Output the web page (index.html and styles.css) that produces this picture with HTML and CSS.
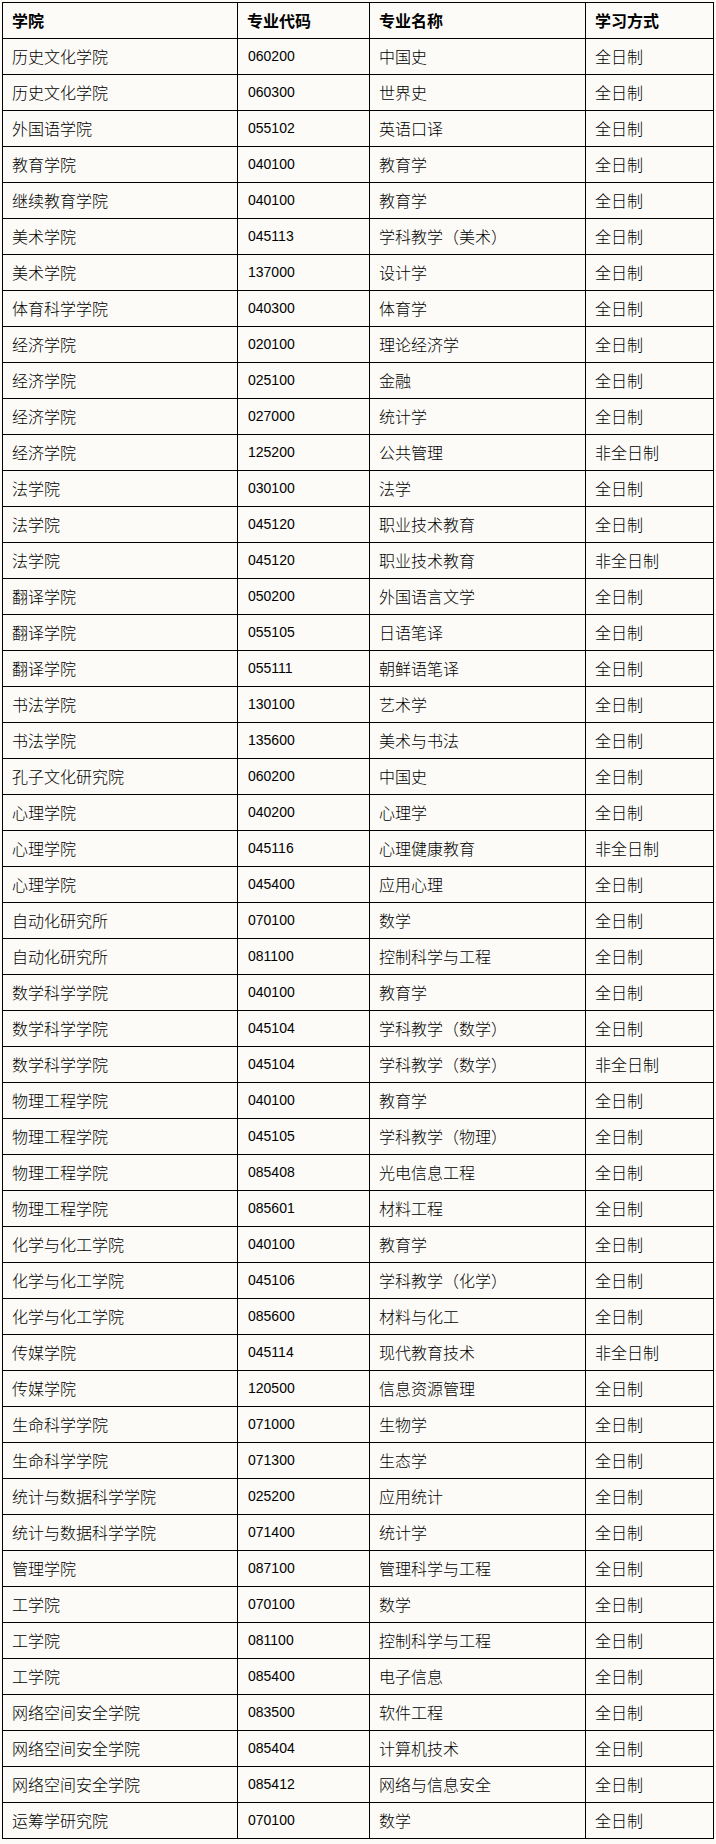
FILE: index.html
```html
<!DOCTYPE html>
<html lang="zh-CN">
<head>
<meta charset="utf-8">
<title>专业列表</title>
<link rel="stylesheet" href="styles.css">
</head>
<body>
<table class="majors">
<colgroup>
<col class="c-college">
<col class="c-code">
<col class="c-name">
<col class="c-mode">
</colgroup>
<thead>
<tr><th>学院</th><th>专业代码</th><th>专业名称</th><th>学习方式</th></tr>
</thead>
<tbody>
<tr><td>历史文化学院</td><td class="num">060200</td><td>中国史</td><td>全日制</td></tr>
<tr><td>历史文化学院</td><td class="num">060300</td><td>世界史</td><td>全日制</td></tr>
<tr><td>外国语学院</td><td class="num">055102</td><td>英语口译</td><td>全日制</td></tr>
<tr><td>教育学院</td><td class="num">040100</td><td>教育学</td><td>全日制</td></tr>
<tr><td>继续教育学院</td><td class="num">040100</td><td>教育学</td><td>全日制</td></tr>
<tr><td>美术学院</td><td class="num">045113</td><td>学科教学（美术）</td><td>全日制</td></tr>
<tr><td>美术学院</td><td class="num">137000</td><td>设计学</td><td>全日制</td></tr>
<tr><td>体育科学学院</td><td class="num">040300</td><td>体育学</td><td>全日制</td></tr>
<tr><td>经济学院</td><td class="num">020100</td><td>理论经济学</td><td>全日制</td></tr>
<tr><td>经济学院</td><td class="num">025100</td><td>金融</td><td>全日制</td></tr>
<tr><td>经济学院</td><td class="num">027000</td><td>统计学</td><td>全日制</td></tr>
<tr><td>经济学院</td><td class="num">125200</td><td>公共管理</td><td>非全日制</td></tr>
<tr><td>法学院</td><td class="num">030100</td><td>法学</td><td>全日制</td></tr>
<tr><td>法学院</td><td class="num">045120</td><td>职业技术教育</td><td>全日制</td></tr>
<tr><td>法学院</td><td class="num">045120</td><td>职业技术教育</td><td>非全日制</td></tr>
<tr><td>翻译学院</td><td class="num">050200</td><td>外国语言文学</td><td>全日制</td></tr>
<tr><td>翻译学院</td><td class="num">055105</td><td>日语笔译</td><td>全日制</td></tr>
<tr><td>翻译学院</td><td class="num">055111</td><td>朝鲜语笔译</td><td>全日制</td></tr>
<tr><td>书法学院</td><td class="num">130100</td><td>艺术学</td><td>全日制</td></tr>
<tr><td>书法学院</td><td class="num">135600</td><td>美术与书法</td><td>全日制</td></tr>
<tr><td>孔子文化研究院</td><td class="num">060200</td><td>中国史</td><td>全日制</td></tr>
<tr><td>心理学院</td><td class="num">040200</td><td>心理学</td><td>全日制</td></tr>
<tr><td>心理学院</td><td class="num">045116</td><td>心理健康教育</td><td>非全日制</td></tr>
<tr><td>心理学院</td><td class="num">045400</td><td>应用心理</td><td>全日制</td></tr>
<tr><td>自动化研究所</td><td class="num">070100</td><td>数学</td><td>全日制</td></tr>
<tr><td>自动化研究所</td><td class="num">081100</td><td>控制科学与工程</td><td>全日制</td></tr>
<tr><td>数学科学学院</td><td class="num">040100</td><td>教育学</td><td>全日制</td></tr>
<tr><td>数学科学学院</td><td class="num">045104</td><td>学科教学（数学）</td><td>全日制</td></tr>
<tr><td>数学科学学院</td><td class="num">045104</td><td>学科教学（数学）</td><td>非全日制</td></tr>
<tr><td>物理工程学院</td><td class="num">040100</td><td>教育学</td><td>全日制</td></tr>
<tr><td>物理工程学院</td><td class="num">045105</td><td>学科教学（物理）</td><td>全日制</td></tr>
<tr><td>物理工程学院</td><td class="num">085408</td><td>光电信息工程</td><td>全日制</td></tr>
<tr><td>物理工程学院</td><td class="num">085601</td><td>材料工程</td><td>全日制</td></tr>
<tr><td>化学与化工学院</td><td class="num">040100</td><td>教育学</td><td>全日制</td></tr>
<tr><td>化学与化工学院</td><td class="num">045106</td><td>学科教学（化学）</td><td>全日制</td></tr>
<tr><td>化学与化工学院</td><td class="num">085600</td><td>材料与化工</td><td>全日制</td></tr>
<tr><td>传媒学院</td><td class="num">045114</td><td>现代教育技术</td><td>非全日制</td></tr>
<tr><td>传媒学院</td><td class="num">120500</td><td>信息资源管理</td><td>全日制</td></tr>
<tr><td>生命科学学院</td><td class="num">071000</td><td>生物学</td><td>全日制</td></tr>
<tr><td>生命科学学院</td><td class="num">071300</td><td>生态学</td><td>全日制</td></tr>
<tr><td>统计与数据科学学院</td><td class="num">025200</td><td>应用统计</td><td>全日制</td></tr>
<tr><td>统计与数据科学学院</td><td class="num">071400</td><td>统计学</td><td>全日制</td></tr>
<tr><td>管理学院</td><td class="num">087100</td><td>管理科学与工程</td><td>全日制</td></tr>
<tr><td>工学院</td><td class="num">070100</td><td>数学</td><td>全日制</td></tr>
<tr><td>工学院</td><td class="num">081100</td><td>控制科学与工程</td><td>全日制</td></tr>
<tr><td>工学院</td><td class="num">085400</td><td>电子信息</td><td>全日制</td></tr>
<tr><td>网络空间安全学院</td><td class="num">083500</td><td>软件工程</td><td>全日制</td></tr>
<tr><td>网络空间安全学院</td><td class="num">085404</td><td>计算机技术</td><td>全日制</td></tr>
<tr><td>网络空间安全学院</td><td class="num">085412</td><td>网络与信息安全</td><td>全日制</td></tr>
<tr><td>运筹学研究院</td><td class="num">070100</td><td>数学</td><td>全日制</td></tr>
</tbody>
</table>
</body>
</html>
```

FILE: styles.css
```css
html, body {
  margin: 0;
  padding: 0;
  background: #fcfbf7;
}

body {
  padding: 2px 0 0 2px;
  font-family: "Noto Sans CJK SC", "Liberation Sans", sans-serif;
  font-size: 16px;
  color: #000;
}

.majors {
  border-collapse: collapse;
  table-layout: fixed;
  width: 711px;
}

.c-college { width: 235px; }
.c-code { width: 132px; }
.c-name { width: 216px; }
.c-mode { width: 128px; }

.majors th,
.majors td {
  border: 1px solid #000;
  height: 33px;
  padding: 0 0 2px 9px;
  text-align: left;
  vertical-align: middle;
  white-space: nowrap;
  line-height: 20px;
  font-weight: 300;
}

.majors th {
  font-weight: 700;
}

.majors td.num {
  font-family: "Liberation Sans", sans-serif;
  font-size: 14px;
  font-weight: 400;
  padding-left: 10px;
}
```
